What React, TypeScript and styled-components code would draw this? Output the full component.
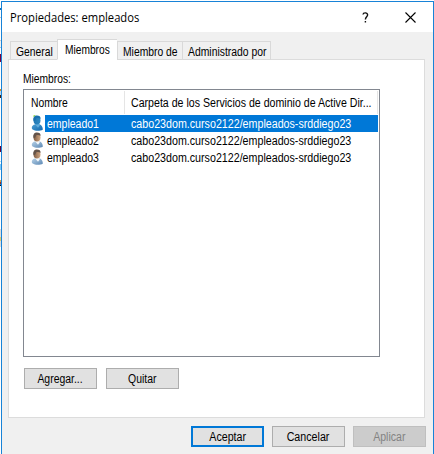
import React from "react";
import styled, { createGlobalStyle, css } from "styled-components";

const GlobalStyle = createGlobalStyle`
  * { box-sizing: border-box; }
  body { margin: 0; background: #fff; overflow: hidden; }
`;

const Desktop = styled.div`
  display: flex;
  width: 434px;
  height: 454px;
  padding-top: 1px;
  font: 12px/17px "Liberation Sans", Arial, sans-serif;
  color: #000;
  background: #fff;
`;

const DesktopEdge = styled.div`
  width: 1px;
  margin-top: -1px;
  background: linear-gradient(
    #fff 8px, #1673b8 8px 10px, #fff 10px 17px, #b9c8d6 17px 18px, #fff 18px 40px,
    #ccc 40px 41px, #f2f2f2 41px 47px, #9ac4e4 47px 48px, #fff 48px 54px, #7a003c 54px 62px, #fff 62px 89px,
    #d98c20 89px 91px, #b8d8f0 91px 95px, #402010 95px 98px, #fff 98px 146px,
    #660033 146px 152px, #fff 152px 161px, #a8dcf8 161px 162px, #fff 162px 164px,
    #7cc8f8 164px 170px, #fff 170px 180px, #d9a040 180px 182px, #a03020 182px 184px,
    #2080d0 184px 185px, #101010 185px 186px, #fff 186px 229px,
    #ddd 229px 237px, #e0cc70 237px 241px, #ddd 241px 247px, #fff 247px
  );
`;

const Dialog = styled.section`
  display: flex;
  flex-direction: column;
  width: 433px;
  height: 453px;
  border: 1px solid #1883d7;
  border-bottom: 0;
  background: #f0f0f0;
`;

const TitleBar = styled.header`
  display: flex;
  align-items: center;
  height: 30px;
  padding-left: 8px;
  background: #fff;
`;

const Title = styled.h1`
  flex: 1;
  margin: 0;
  font: 400 12px/17px "Open Sans", "Noto Sans", sans-serif;
  white-space: nowrap;
  transform: scaleX(0.934);
  transform-origin: 0 50%;
`;

const WindowButton = styled.button`
  display: grid;
  place-items: center;
  width: 45px;
  height: 30px;
  padding: 0;
  border: 0;
  background: transparent;
`;

const Condensed = styled.span<{ $scale: number; $center?: boolean }>`
  display: inline-block;
  white-space: nowrap;
  transform: translateY(1px) scaleX(${(p) => p.$scale});
  transform-origin: ${(p) => (p.$center ? "50%" : "0")} 50%;
`;

const TabList = styled.div`
  display: flex;
  align-items: flex-end;
  height: 28px;
  padding-left: 8px;
  z-index: 1;
`;

const Tab = styled.div<{ $width: number; $active?: boolean }>`
  width: ${(p) => p.$width}px;
  height: 19px;
  padding: 1px 0 0 5px;
  border: 1px solid #d9d9d9;
  border-right-width: 0;
  background: #f0f0f0;
  &:last-child { border-right-width: 1px; }
  ${(p) =>
    p.$active &&
    css`
      height: 21px;
      padding: 1px 0 0 7px;
      border-bottom-color: #fff;
      background: #fff;
    `}
`;

const Panel = styled.div`
  display: flex;
  flex-direction: column;
  width: 417px;
  height: 359px;
  margin: -1px 0 0 6px;
  padding: 10px 0 0 14px;
  border: 1px solid #dcdcdc;
  background: #fff;
`;

const FieldLabel = styled.div`
  height: 19px;
`;

const List = styled.div`
  width: 357px;
  height: 268px;
  border: 1px solid #828790;
  background: #fff;
`;

const HeaderRow = styled.div`
  display: grid;
  grid-template-columns: 101px 253px;
  height: 25px;
  padding-top: 1px;
`;

const HeaderCell = styled.div`
  height: 23px;
  padding: 3px 0 0 6px;
  border-right: 1px solid #e5e5e5;
  &:first-child { padding-left: 7px; }
`;

const MemberRow = styled.div`
  display: flex;
  height: 17px;
  padding-left: 6px;
`;

const RowText = styled.div<{ $selected: boolean }>`
  display: grid;
  grid-template-columns: 84px 1fr;
  width: 333px;
  margin-left: -1px;
  padding-left: 2px;
  color: ${(p) => (p.$selected ? "#fff" : "#000")};
  background: ${(p) => (p.$selected ? "#0078d7" : "transparent")};
`;

const IconSlot = styled.span`
  display: block;
  width: 16px;
  height: 17px;
`;

const ButtonRow = styled.div<{ $footer?: boolean }>`
  display: flex;
  gap: ${(p) => (p.$footer ? 8 : 9)}px;
  padding: ${(p) => (p.$footer ? "8px 0 0 189px" : "11px 0 0 1px")};
`;

const Button = styled.button<{ $primary?: boolean }>`
  width: 73px;
  height: 21px;
  padding: 0;
  border: ${(p) => (p.$primary ? "2px solid #0078d7" : "1px solid #adadad")};
  background: #e1e1e1;
  font: inherit;
  line-height: 17px;
  color: #000;
  &:disabled {
    border-color: #bfbfbf;
    background: #ccc;
    color: #838383;
  }
`;

function UserIcon({ selected }: { selected: boolean }) {
  const id = selected ? "sel" : "usr";
  return (
    <svg width="16" height="17" viewBox="0 0 16 17">
      <defs>
        <linearGradient id={`${id}-body`} x1="0" x2="1" y1="0" y2="1">
          <stop offset="0" stopColor={selected ? "#4c9ed2" : "#b9d3e8"} />
          <stop offset="1" stopColor={selected ? "#1268ae" : "#5a87b4"} />
        </linearGradient>
        <linearGradient id={`${id}-face`}>
          <stop offset="0" stopColor={selected ? "#1f78b4" : "#7d5a42"} />
          <stop offset="1" stopColor={selected ? "#3088c2" : "#cfa682"} />
        </linearGradient>
      </defs>
      <path d="M1.8 13.2C1.6 11.2 3 9.8 5.4 9.2h3.8c2.8.8 3.7 3 3.6 5.6-2.4 1.2-6.2 1.4-8.6.4-1.3-.5-2.2-1.1-2.4-2z" fill={`url(#${id}-body)`} />
      <path d="M5 9.2 8 12.8l1.9-2.6-1-2H5.8z" fill={selected ? "#5fabdb" : "#f5f8fa"} />
      <ellipse cx="7" cy="5.2" rx="3.5" ry="4.3" fill={`url(#${id}-face)`} />
      <path d="M3.5 5.8C2.7 2.4 4.5.5 7 .5c2.3 0 3.7 1.2 3.6 3.2-1.8-.8-3.2-.9-4.3-.4L5 6z" fill={selected ? "#1a70ad" : "#635349"} />
      {selected && <path d="M3.2 1.2 5.2.5" stroke="#86d62b" strokeWidth="1" />}
    </svg>
  );
}

const members = ["empleado1", "empleado2", "empleado3"];

export default function App() {
  return (
    <>
      <GlobalStyle />
      <Desktop>
        <DesktopEdge />
        <Dialog>
          <TitleBar>
            <Title>Propiedades: empleados</Title>
            <WindowButton aria-label="Ayuda">
              <svg width="7" height="11" viewBox="0 0 7 11" fill="none" stroke="#111" strokeWidth="1.4">
                <path d="M1 2.5C1.2.3 5.8.2 5.6 3 5.5 4.8 3.4 4.8 3.4 7.6M3.4 9v1.5" />
              </svg>
            </WindowButton>
            <WindowButton aria-label="Cerrar">
              <svg width="11" height="11" viewBox="0 0 11 11" stroke="#000" strokeWidth="1.1">
                <path d="M.5.5l10 10M10.5.5l-10 10" />
              </svg>
            </WindowButton>
          </TitleBar>
          <TabList>
            <Tab $width={47}><Condensed $scale={0.86}>General</Condensed></Tab>
            <Tab $width={60} $active><Condensed $scale={0.85}>Miembros</Condensed></Tab>
            <Tab $width={65}><Condensed $scale={0.86}>Miembro de</Condensed></Tab>
            <Tab $width={89}><Condensed $scale={0.865}>Administrado por</Condensed></Tab>
          </TabList>
          <Panel>
            <FieldLabel><Condensed $scale={0.855}>Miembros:</Condensed></FieldLabel>
            <List>
              <HeaderRow>
                <HeaderCell><Condensed $scale={0.86}>Nombre</Condensed></HeaderCell>
                <HeaderCell>
                  <Condensed $scale={0.884}>Carpeta de los Servicios de dominio de Active Dir...</Condensed>
                </HeaderCell>
              </HeaderRow>
              {members.map((name, i) => (
                <MemberRow key={name}>
                  <IconSlot><UserIcon selected={i === 0} /></IconSlot>
                  <RowText $selected={i === 0}>
                    <Condensed $scale={0.875}>{name}</Condensed>
                    <Condensed $scale={0.89}>cabo23dom.curso2122/empleados-srddiego23</Condensed>
                  </RowText>
                </MemberRow>
              ))}
            </List>
            <ButtonRow>
              <Button><Condensed $scale={0.87} $center>Agregar...</Condensed></Button>
              <Button><Condensed $scale={0.87} $center>Quitar</Condensed></Button>
            </ButtonRow>
          </Panel>
          <ButtonRow $footer>
            <Button $primary><Condensed $scale={0.89} $center>Aceptar</Condensed></Button>
            <Button><Condensed $scale={0.89} $center>Cancelar</Condensed></Button>
            <Button disabled><Condensed $scale={0.88} $center>Aplicar</Condensed></Button>
          </ButtonRow>
        </Dialog>
      </Desktop>
    </>
  );
}
